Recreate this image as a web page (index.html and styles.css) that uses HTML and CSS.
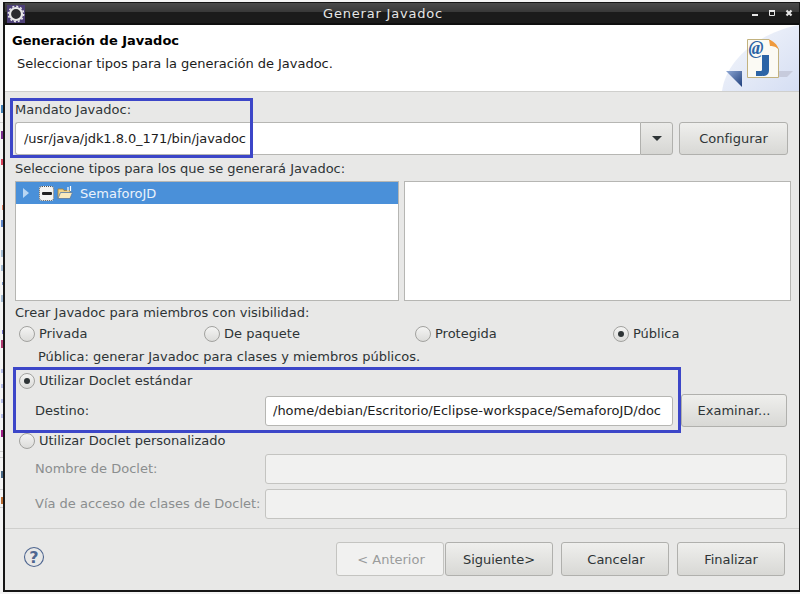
FILE: index.html
```html
<!DOCTYPE html>
<html lang="es">
<head>
<meta charset="utf-8">
<title>Generar Javadoc</title>
<link rel="stylesheet" href="styles.css">
</head>
<body>
<div class="window">
  <div class="titlebar">
    <svg class="app-icon" width="18" height="18" viewBox="0 0 18 18">
      <rect width="18" height="18" fill="#4d3f77"/>
      <circle cx="9" cy="9" r="6" fill="#2a2a2e" stroke="#e8e8e8" stroke-width="2.2"/>
      <circle cx="9" cy="9" r="7.6" fill="none" stroke="#e8e8e8" stroke-width="1.6" stroke-dasharray="2 1.98"/>
    </svg>
    <span class="title">Generar Javadoc</span>
    <div class="winctl">
      <svg width="12" height="12" viewBox="0 0 12 12"><rect x="3" y="7" width="6" height="2" fill="#e6e6e6"/></svg>
      <svg width="12" height="12" viewBox="0 0 12 12"><path d="M3.500 3.500h5v5h-5z" fill="none" stroke="#e6e6e6"/><rect x="3" y="3" width="6" height="2" fill="#e6e6e6"/></svg>
      <svg width="12" height="12" viewBox="0 0 12 12"><path d="M3.500 3.500l5 5M8.500 3.500l-5 5" stroke="#e6e6e6" stroke-width="2.200"/></svg>
    </div>
  </div>
  <header class="banner">
    <div class="banner-text">
      <h1 class="banner-title">Generación de Javadoc</h1>
      <p class="banner-sub">Seleccionar tipos para la generación de Javadoc.</p>
    </div>
    <svg class="banner-art" width="78" height="66" viewBox="0 0 78 66">
      <defs>
        <linearGradient id="sky" x1="0" y1="0" x2="1" y2="1"><stop offset="0" stop-color="#f6f8fc"/><stop offset="1" stop-color="#d5def3"/></linearGradient>
        <linearGradient id="tri" x1="0" y1="0" x2="1" y2="1"><stop offset="0" stop-color="#8fa8d4"/><stop offset="1" stop-color="#1f3f7c"/></linearGradient>
      </defs>
      <path d="M1 66C5 36 36 8 78 0V66Z" fill="url(#sky)"/>
      <path d="M52 46H72L66 52H52Z" fill="#c7cbdc"/>
      <path d="M5 46H21V62Z" fill="url(#tri)"/>
      <path d="M26.500 14.500H48L57.500 24V52.500H26.500Z" fill="#fbfaf4" stroke="#c2b27f"/>
      <path d="M48 14.500C51 15 57 20 57.500 24C54 21 51 21 49 21Z" fill="#ef9a3d"/>
      <path d="M41 30H48V45C48 49 46 51 41 51H35V46H39C40.500 46 41 45.500 41 45Z" fill="#2c64a6"/>
      <text x="27.500" y="29" class="at">@</text>
    </svg>
  </header>

  <main class="content">
    <label class="lbl lbl-cmd">Mandato Javadoc:</label>
    <div class="row-cmd">
      <div class="combo">
        <input class="field grow combo-field" value="/usr/java/jdk1.8.0_171/bin/javadoc" readonly>
        <span class="combo-btn"><i class="caret"></i></span>
      </div>
      <button class="btn btn-side">Configurar</button>
    </div>

    <label class="lbl lbl-types">Seleccione tipos para los que se generará Javadoc:</label>
    <div class="lists">
      <div class="list list-left">
        <div class="tree-row">
          <i class="twisty"></i>
          <span class="check"><i></i></span>
          <svg width="16" height="14" viewBox="0 0 16 14"><path d="M1 3h5l1 1.500h6V12.500H1Z" fill="#f3d488" stroke="#a5803a" stroke-width=".8"/><path d="M1 12.500 3.500 6.500H15.500L13 12.500Z" fill="#f9e9bd" stroke="#5578a8" stroke-width=".8"/><path d="M11 1v4M13.500 0v5" stroke="#fff" stroke-width="1.200"/></svg>
          <span class="tree-label">SemaforoJD</span>
        </div>
      </div>
      <div class="list list-right"></div>
    </div>

    <label class="lbl lbl-vis">Crear Javadoc para miembros con visibilidad:</label>
    <div class="radios">
      <span class="radio-item col-a"><i class="radio"></i>Privada</span>
      <span class="radio-item col-b"><i class="radio"></i>De paquete</span>
      <span class="radio-item col-c"><i class="radio"></i>Protegida</span>
      <span class="radio-item col-d"><i class="radio on"></i>Pública</span>
    </div>
    <p class="lbl vis-note">Pública: generar Javadoc para clases y miembros públicos.</p>

    <span class="radio-item doclet-std"><i class="radio on"></i>Utilizar Doclet estándar</span>
    <div class="form-row row-dest">
      <span class="form-lbl">Destino:</span>
      <input class="field dest-field" value="/home/debian/Escritorio/Eclipse-workspace/SemaforoJD/doc" readonly>
      <button class="btn btn-exam">Examinar...</button>
    </div>
    <span class="radio-item doclet-custom"><i class="radio"></i>Utilizar Doclet personalizado</span>
    <div class="form-row row-name">
      <span class="form-lbl dim raise">Nombre de Doclet:</span>
      <span class="field-off"></span>
    </div>
    <div class="form-row row-path">
      <span class="form-lbl dim raise">Vía de acceso de clases de Doclet:</span>
      <span class="field-off"></span>
    </div>
  </main>

  <footer class="actions">
    <svg class="help" width="22" height="22" viewBox="0 0 22 22">
      <circle cx="11" cy="11" r="9.500" fill="none" stroke="#4f6690" stroke-width="1.100"/>
      <text x="11" y="16.500" class="help-q">?</text>
    </svg>
    <div class="buttons">
      <button class="btn btn-foot btn-off w-prev">&lt; Anterior</button>
      <button class="btn btn-foot w-next">Siguiente&gt;</button>
      <button class="btn btn-foot w-cancel">Cancelar</button>
      <button class="btn btn-foot w-finish">Finalizar</button>
    </div>
  </footer>

  <div class="mark mark-a"></div>
  <div class="mark mark-b"></div>
</div>
</body>
</html>
```

FILE: styles.css
```css
* { box-sizing: border-box; }
html, body { margin: 0; padding: 0; }
body {
  width: 800px;
  height: 594px;
  overflow: hidden;
  font-family: "DejaVu Sans", sans-serif;
  font-size: 13px;
  color: #2e3436;
  background:
    linear-gradient(#3f7fb5, #3f7fb5) 1px 105px / 2px 8px no-repeat,
    linear-gradient(#cfcfcf, #cfcfcf) 0 122px / 3px 1px no-repeat,
    linear-gradient(#7a2f8f, #7a2f8f) 1px 131px / 2px 8px no-repeat,
    linear-gradient(#d8425a, #d8425a) 1px 159px / 2px 6px no-repeat,
    linear-gradient(#e58a6a, #e58a6a) 2px 205px / 1px 5px no-repeat,
    linear-gradient(#5f86c8, #5f86c8) 1px 220px / 2px 7px no-repeat,
    linear-gradient(#a5bdd4, #a5bdd4) 1px 250px / 2px 7px no-repeat,
    linear-gradient(#a5bdd4, #a5bdd4) 1px 265px / 2px 6px no-repeat,
    linear-gradient(#7a94c0, #7a94c0) 2px 282px / 1px 3px no-repeat,
    linear-gradient(#a5bdd4, #a5bdd4) 1px 295px / 2px 7px no-repeat,
    linear-gradient(#7a7ac8, #7a7ac8) 2px 330px / 1px 4px no-repeat,
    linear-gradient(#b03a70, #b03a70) 1px 340px / 2px 8px no-repeat,
    linear-gradient(#b8c0e8, #b8c0e8) 1px 369px / 2px 4px no-repeat,
    linear-gradient(#b8c0e8, #b8c0e8) 1px 384px / 2px 4px no-repeat,
    linear-gradient(#b8c0e8, #b8c0e8) 1px 399px / 2px 4px no-repeat,
    linear-gradient(#b8c0e8, #b8c0e8) 1px 414px / 2px 4px no-repeat,
    linear-gradient(#a01f88, #a01f88) 1px 430px / 2px 7px no-repeat,
    linear-gradient(#cfcfcf, #cfcfcf) 0 451px / 3px 1px no-repeat,
    linear-gradient(#cfcfcf, #cfcfcf) 0 457px / 3px 1px no-repeat,
    linear-gradient(#4a6a88, #4a6a88) 1px 471px / 2px 7px no-repeat,
    linear-gradient(#cfcfcf, #cfcfcf) 0 489px / 3px 1px no-repeat,
    linear-gradient(#b86a30, #b86a30) 1px 497px / 2px 7px no-repeat,
    linear-gradient(#cfcfcf, #cfcfcf) 0 507px / 3px 1px no-repeat,
    #f4f4f4;
}
.window {
  position: relative;
  margin: 2px 0 0 3px;
  width: 797px;
  height: 590px;
  display: flex;
  flex-direction: column;
  background: #e8e8e7;
  border: 2px solid #161616;
  border-top-width: 1px;
  border-right-width: 1px;
}
.titlebar {
  height: 22px;
  flex: none;
  display: flex;
  align-items: center;
  position: relative;
  background: linear-gradient(#4a4a4a 0, #383838 45%, #1b1b1b 46%, #1b1b1b 100%);
  border-bottom: 2px solid #0f0f0f;
}
.app-icon { position: absolute; left: 2px; top: 2px; }
.title {
  width: 100%;
  text-align: center;
  color: #e6e6e6;
  font-size: 13px;
  letter-spacing: .8px;
  padding-right: 38px;
}
.winctl { position: absolute; right: 4px; top: 4px; display: flex; gap: 5px; }
.banner {
  height: 67px;
  flex: none;
  display: flex;
  justify-content: space-between;
  background: #fff;
  border-bottom: 1px solid #cfcfcd;
}
.banner-title { margin: 8px 0 0 7px; font-size: 13px; line-height: 16px; font-weight: 700; color: #000; }
.banner-sub { margin: 7px 0 0 12px; line-height: 16px; color: #1c1c1c; letter-spacing: -.02px; }
.banner-art { flex: none; }
.at { font: italic 700 18px "Liberation Serif", serif; fill: #2c64a6; }

.content { flex: 1; display: flex; flex-direction: column; padding: 0 8px 0 10px; min-height: 0; }
.lbl { display: block; line-height: 16px; margin: 0; color: #2e3436; }
.lbl-cmd { margin-top: 10px; }
.row-cmd { display: flex; gap: 6px; margin-top: 4px; height: 33px; padding-right: 3px; }
.combo { flex: 1; display: flex; min-width: 0; }
.field {
  display: block;
  font: 13px "DejaVu Sans", sans-serif;
  color: #1c1c1c;
  background: #fff;
  border: 1px solid #b6b6b3;
  border-radius: 3px;
  outline: none;
  padding: 0 8px;
}
.grow { flex: 1; min-width: 0; }
.combo-field { border-right: 0; border-radius: 3px 0 0 3px; letter-spacing: -.06px; }
.combo-btn {
  width: 33px;
  flex: none;
  display: flex;
  align-items: center;
  justify-content: center;
  border: 1px solid #b0b0ad;
  border-radius: 0 3px 3px 0;
  background: linear-gradient(#ececea, #d6d6d3);
}
.caret { width: 0; height: 0; border: 5px solid transparent; border-top: 5px solid #2e3436; border-bottom: 0; }
.btn {
  display: block;
  font: 13px "DejaVu Sans", sans-serif;
  color: #2e3436;
  border: 1px solid #b0b0ad;
  border-radius: 3px;
  background: linear-gradient(#efefed, #d8d8d5);
  padding: 0;
}
.btn-side { width: 109px; }
.lbl-types { margin-top: 6px; letter-spacing: -.04px; }
.lists { display: flex; gap: 5px; height: 120px; margin-top: 4px; }
.list { background: #fff; border: 1px solid #b6b6b3; }
.list-left { width: 384px; }
.list-right { width: 387px; }
.tree-row {
  height: 22px;
  background: #4a90d9;
  display: flex;
  align-items: center;
  color: #fff;
  padding-left: 7px;
}
.twisty { width: 0; height: 0; border: 5px solid transparent; border-left: 6px solid #b9d6f3; border-right: 0; margin-right: 10px; }
.check {
  width: 15px; height: 15px;
  background: #f4f4f2;
  border: 1px dotted #555;
  border-radius: 3px;
  display: flex;
  align-items: center;
  justify-content: center;
  margin-right: 3px;
}
.check i { width: 10px; height: 3px; background: #222; border-radius: 1px; }
.tree-label { margin-left: 7px; color: #eaf2fb; }
.lbl-vis { margin-top: 4px; }
.radios { position: relative; display: flex; height: 16px; margin-top: 5px; }
.radio-item { display: flex; align-items: center; line-height: 16px; color: #2e3436; }
.radio {
  width: 16px; height: 16px;
  flex: none;
  margin-right: 4px;
  border: 1px solid #a2a29f;
  border-radius: 50%;
  background: linear-gradient(#f4f4f3, #dcdcda);
  display: flex;
  align-items: center;
  justify-content: center;
}
.radio.on::after { content: ""; width: 6px; height: 6px; border-radius: 50%; background: #2e3436; }
.col-a { width: 184px; padding-left: 4px; }
.col-b { width: 211px; padding-left: 5px; }
.col-c { width: 198px; padding-left: 5px; }
.col-d { padding-left: 5px; }
.vis-note { margin: 7px 0 0 23px; }
.doclet-std { margin: 8px 0 0 4px; }
.form-row { display: flex; align-items: center; }
.form-lbl { width: 250px; flex: none; padding-left: 20px; }
.raise { margin-top: -2px; }
.dim { color: #8b8e8f; }
.row-dest { margin-top: 5px; height: 33px; }
.dest-field { width: 408px; height: 30px; padding: 0 7px; }
.btn-exam { width: 106px; height: 33px; margin-left: 8px; }
.doclet-custom { margin-top: 6px; padding-left: 4px; }
.row-name { margin-top: 5px; height: 30px; }
.row-path { margin-top: 5px; height: 30px; }
.field-off {
  flex: none;
  display: block;
  width: 522px;
  height: 30px;
  background: #f1f1f0;
  border: 1px solid #c4c4c1;
  border-radius: 3px;
}
.actions {
  height: 62px;
  flex: none;
  display: flex;
  align-items: flex-start;
  justify-content: space-between;
  border-top: 1px solid #cfcfcd;
  padding: 13px 14px 0 18px;
}
.help { margin-top: 4px; }
.help-q { font: 700 16px "DejaVu Sans", sans-serif; fill: #4f6690; text-anchor: middle; }
.buttons { display: flex; }
.btn-foot { height: 34px; width: 108px; }
.btn-off { color: #9a9c9c; background: #f1f1f0; border-color: #c4c4c1; padding-left: 2px; }
.w-prev { margin-right: 1px; }
.w-next { margin-right: 8px; }
.w-cancel { margin-right: 8px; padding-left: 2px; }
.mark { position: absolute; border: 3px solid #3c46c8; pointer-events: none; }
.mark-a { left: 5px; top: 95px; width: 243px; height: 60px; }
.mark-b { left: 8px; top: 364px; width: 668px; height: 66px; }
```
